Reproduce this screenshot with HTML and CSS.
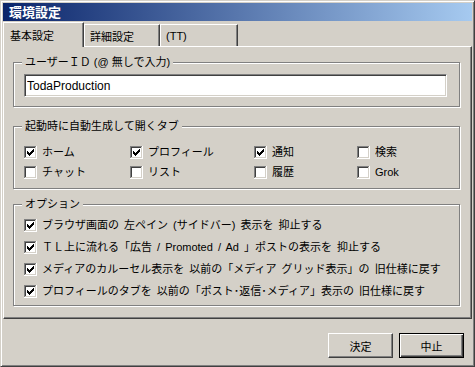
FILE: index.html
```html
<!DOCTYPE html>
<html lang="ja">
<head>
  <meta charset="UTF-8" />
  <title>環境設定</title>
  <link rel="stylesheet" href="styles.css">
</head>
<body>
  <svg class="sprites" xmlns="http://www.w3.org/2000/svg">
    <symbol id="cb" viewBox="0 0 13 13">
      <path d="M0 0h12v1H1v11H0z" fill="#808080"/>
      <path d="M1 1h10v1H2v9H1z" fill="#404040"/>
      <path d="M12 0h1v13H0v-1h12z" fill="#fff"/>
      <path d="M11 1h1v11H1v-1h10z" fill="#d4d0c8"/>
      <rect x="2" y="2" width="9" height="9" fill="#fff"/>
    </symbol>
    <symbol id="tick" viewBox="0 0 13 13">
      <path d="M3 5h1v3H3zM4 6h1v3H4zM5 7h1v3H5zM6 6h1v3H6zM7 5h1v3H7zM8 4h1v3H8zM9 3h1v3H9z" fill="#000"/>
    </symbol>
  </svg>

  <div class="window">
    <div class="titlebar">環境設定</div>

    <div class="tabs">
      <div class="tab active">基本設定</div>
      <div class="tab">詳細設定</div>
      <div class="tab last">(TT)</div>
    </div>

    <div class="panel">
      <fieldset class="group group-id">
        <legend>ユーザーＩＤ (@ 無しで入力)</legend>
        <input type="text" class="textbox" value="TodaProduction">
      </fieldset>

      <fieldset class="group group-tabs">
        <legend>起動時に自動生成して開くタブ</legend>
        <div class="tab-grid">
          <label class="check"><svg class="cb"><use href="#cb"/><use href="#tick"/></svg>ホーム</label>
          <label class="check"><svg class="cb"><use href="#cb"/><use href="#tick"/></svg>プロフィール</label>
          <label class="check"><svg class="cb"><use href="#cb"/><use href="#tick"/></svg>通知</label>
          <label class="check"><svg class="cb"><use href="#cb"/></svg>検索</label>
          <label class="check"><svg class="cb"><use href="#cb"/></svg>チャット</label>
          <label class="check"><svg class="cb"><use href="#cb"/></svg>リスト</label>
          <label class="check"><svg class="cb"><use href="#cb"/></svg>履歴</label>
          <label class="check"><svg class="cb"><use href="#cb"/></svg>Grok</label>
        </div>
      </fieldset>

      <fieldset class="group group-opts">
        <legend>オプション</legend>
        <div class="opt-list">
          <label class="check"><svg class="cb"><use href="#cb"/><use href="#tick"/></svg>ブラウザ画面の 左ペイン (サイドバー) 表示を 抑止する</label>
          <label class="check"><svg class="cb"><use href="#cb"/><use href="#tick"/></svg>ＴＬ上に流れる「広告 / Promoted / Ad 」ポストの表示を 抑止する</label>
          <label class="check"><svg class="cb"><use href="#cb"/><use href="#tick"/></svg>メディアのカルーセル表示を 以前の「メディア グリッド表示」の 旧仕様に戻す</label>
          <label class="check"><svg class="cb"><use href="#cb"/><use href="#tick"/></svg>プロフィールのタブを 以前の「ポスト･返信･メディア」表示の 旧仕様に戻す</label>
        </div>
      </fieldset>
    </div>

    <div class="footer">
      <button class="btn">決定</button>
      <button class="btn btn-default">中止</button>
    </div>
  </div>
</body>
</html>
```

FILE: styles.css
```css
body {
  margin: 0;
  background: #d4d0c8;
  color: #000;
  font-family: "Liberation Sans", "Noto Sans CJK JP", sans-serif;
  font-size: 11px;
}
.sprites {
  position: absolute;
  width: 0;
  height: 0;
}
.window {
  width: 475px;
  height: 367px;
  box-sizing: border-box;
  border: 1px solid;
  border-color: #d4d0c8 #404040 #404040 #d4d0c8;
  box-shadow: inset 1px 1px #fff, inset -1px -1px #808080;
  padding: 2px;
  background: #d4d0c8;
}
.titlebar {
  height: 18px;
  line-height: 18px;
  padding-left: 6px;
  background: linear-gradient(to right, #0a246a, #a6caf0);
  color: #fff;
  font-family: "Noto Sans CJK JP", sans-serif;
  font-size: 13px;
  font-weight: bold;
}

/* tabs */
.tabs {
  display: flex;
  align-items: flex-end;
  height: 24px;
  margin-top: 1px;
}
.tab {
  width: 76px;
  height: 22px;
  box-sizing: border-box;
  border: 1px solid #fff;
  border-bottom: 0;
  border-right-color: #404040;
  box-shadow: inset -1px 0 #808080;
  padding-left: 5px;
  display: flex;
  align-items: center;
}
.tab.last {
  width: 78px;
}
.tab.active {
  width: 81px;
  height: 25px;
  margin-bottom: -1px;
  padding-left: 6px;
  background: #d4d0c8;
  position: relative;
  z-index: 1;
}
.panel {
  height: 273px;
  box-sizing: border-box;
  border: 1px solid;
  border-color: #fff #404040 #404040 #fff;
  box-shadow: inset -1px -1px #808080;
  padding: 8px 11px 0 9px;
}

/* group boxes */
.group {
  margin: 0;
  border: 1px solid #808080;
  box-shadow: inset 1px 1px #fff, 1px 1px #fff;
  padding: 0 12px 0 10px;
  min-width: 0;
}
.group legend {
  margin-left: -2px;
  padding: 0 3px;
  line-height: 14px;
  background: #d4d0c8;
}
.group-id {
  padding-top: 5px;
  padding-bottom: 9px;
}
.group-tabs {
  margin-top: 12px;
  padding-top: 13px;
  padding-bottom: 9px;
}
.group-opts {
  margin-top: 8px;
  padding-top: 8px;
  padding-bottom: 7px;
}
.textbox {
  display: block;
  width: 100%;
  height: 23px;
  box-sizing: border-box;
  margin: 0;
  padding: 0 2px;
  border: 1px solid;
  border-color: #808080 #fff #fff #808080;
  box-shadow: inset 1px 1px #404040, inset -1px -1px #d4d0c8;
  background: #fff;
  font-family: "Liberation Sans", sans-serif;
  font-size: 12px;
  color: #000;
  outline: none;
}

/* checkboxes */
.tab-grid {
  display: grid;
  grid-template-columns: 106px 124px 103px auto;
  row-gap: 7px;
}
.opt-list {
  display: flex;
  flex-direction: column;
  gap: 9px;
  word-spacing: 2px;
}
.check {
  display: flex;
  align-items: center;
  gap: 5px;
  height: 13px;
  line-height: 13px;
  white-space: nowrap;
}
.cb {
  width: 13px;
  height: 13px;
  flex: none;
}

/* buttons */
.footer {
  display: flex;
  justify-content: flex-end;
  gap: 6px;
  padding: 14px 8px 0 0;
}
.btn {
  width: 65px;
  height: 25px;
  box-sizing: border-box;
  padding: 0;
  border: 1px solid;
  border-color: #fff #404040 #404040 #fff;
  box-shadow: inset -1px -1px #808080;
  background: #d4d0c8;
  color: #000;
  font-family: "Noto Sans CJK JP", sans-serif;
  font-size: 11px;
}
.btn-default {
  border-color: #000;
  box-shadow: inset 1px 1px #fff, inset -1px -1px #404040, inset -2px -2px #808080;
}
```
